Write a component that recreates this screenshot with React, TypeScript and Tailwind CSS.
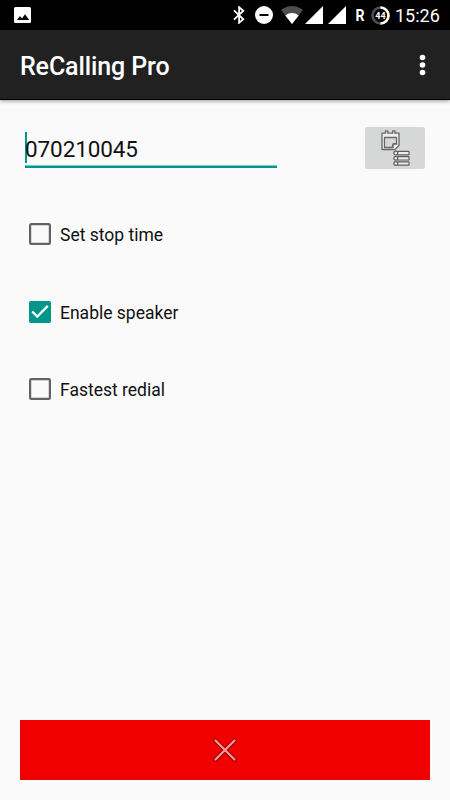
import React, { useState } from "react";

function StatusBar() {
  return (
    <div className="flex h-[30px] items-center bg-black text-white">
      <svg className="ml-[14px] shrink-0" width="17" height="16" viewBox="0 0 17 16">
        <rect width="17" height="16" rx="1.5" fill="#fff" />
        <path d="M3 13l3-4 2 2.4 3-4.1 4.2 5.7z" fill="#000" />
      </svg>
      <svg className="ml-[202px] shrink-0" width="12" height="18" viewBox="0 0 12 18" fill="none" stroke="#fff" strokeWidth="1.8">
        <path d="M1 4.3L10.3 13.3 6.1 16.8V1.2L10.3 4.7 1 13.7" />
      </svg>
      <svg className="ml-[10px] shrink-0" width="18" height="18" viewBox="0 0 18 18">
        <circle cx="9" cy="9" r="9" fill="#fff" />
        <rect x="4.5" y="8" width="9" height="2" fill="#000" />
      </svg>
      <svg className="ml-[8px] shrink-0" width="22" height="18" viewBox="0 0 22 18">
        <path d="M11 18L0 4Q11-4 22 4z" fill="#4d4d4d" />
        <path d="M11 18L4.3 9.4Q11 4.8 17.7 9.4z" fill="#fff" />
      </svg>
      <svg className="ml-[2px] shrink-0" width="18" height="18" viewBox="0 0 18 18">
        <path d="M0 18L18 0V18z" fill="#fff" />
      </svg>
      <svg className="ml-[5px] shrink-0" width="18" height="18" viewBox="0 0 18 18">
        <path d="M0 18L18 0V18z" fill="#fff" />
      </svg>
      <svg className="ml-[9px] shrink-0" width="11" height="20" viewBox="0 0 11 20">
        <text x="0.5" y="15.8" fill="#fff" fontSize="16" fontWeight="700" textLength="9" lengthAdjust="spacingAndGlyphs">R</text>
      </svg>
      <svg className="ml-[5px] shrink-0" width="19" height="19" viewBox="0 0 19 19">
        <circle cx="9.5" cy="9.5" r="8" fill="none" stroke="#4d4d4d" strokeWidth="2.6" />
        <path d="M9.5 1.5A8 8 0 1 1 9.5 17.5" fill="none" stroke="#fff" strokeWidth="2.6" />
        <text x="9.5" y="12.8" textAnchor="middle" fill="#fff" fontSize="9" fontWeight="700">44</text>
      </svg>
      <span className="ml-[5px] pt-[2px] text-[18px] leading-[30px]">15:26</span>
    </div>
  );
}

function Option({ label, initial = false }: { label: string; initial?: boolean }) {
  const [on, setOn] = useState(initial);
  return (
    <button onClick={() => setOn(!on)} className="flex h-[40px] items-center text-left text-[17.5px] text-[#111]">
      <svg className="mr-[9px] shrink-0" width="22" height="22" viewBox="0 0 22 22" fill="none">
        {on ? (
          <>
            <rect width="22" height="22" rx="2" fill="#009688" />
            <path d="M3.2 10.5l5 5L18.8 4.9" stroke="#fff" strokeWidth="2.3" />
          </>
        ) : (
          <rect x="1.1" y="1.1" width="19.8" height="19.8" rx="1.4" stroke="#636363" strokeWidth="2.2" />
        )}
      </svg>
      <span className="pt-[3px]">{label}</span>
    </button>
  );
}

function LogIcon() {
  return (
    <svg width="60" height="42" viewBox="0 0 60 42" fill="none" strokeLinejoin="round">
      <path d="M17 6.2h3.5V3.8h2.2v2.4h5V3.8h2.2v2.4H34v12.3L30 22.5H17z" fill="#eee" stroke="#686868" strokeWidth="1.3" />
      <path d="M19.5 10.5h12v6l-3.5.3-.8 3.7h-7.7z" fill="#d6d7d7" stroke="#686868" strokeWidth="1.3" />
      <path d="M28.2 21v-3.8h4.3" stroke="#686868" />
      <g fill="#eee" stroke="#5e5e5e" strokeWidth="1.2">
        <rect x="32.5" y="24.4" width="11.5" height="3.4" rx=".6" />
        <rect x="32.5" y="29.6" width="11.5" height="3.4" rx=".6" />
        <rect x="32.5" y="34.8" width="11.5" height="3.4" rx=".6" />
        <circle cx="30.8" cy="26.1" r="1.9" />
        <circle cx="30.8" cy="31.3" r="1.9" />
        <circle cx="30.8" cy="36.5" r="1.9" />
      </g>
    </svg>
  );
}

export default function App() {
  return (
    <div className="flex h-[800px] w-[450px] flex-col overflow-hidden bg-[#fafafa] font-[Roboto,sans-serif]">
      <StatusBar />
      <header className="flex h-[70px] shrink-0 items-center justify-between border-b border-black bg-[#212121] pr-[24px] pl-[20px] shadow-[0_1px_4px_rgba(0,0,0,0.4)]">
        <h1 className="pt-[5px] text-[25px] font-medium tracking-[-0.12px] text-white">ReCalling Pro</h1>
        <button aria-label="Menu">
          <svg width="7" height="22" viewBox="0 0 7 22" fill="#fff">
            <circle cx="3.5" cy="3.5" r="2.8" />
            <circle cx="3.5" cy="11" r="2.8" />
            <circle cx="3.5" cy="18.5" r="2.8" />
          </svg>
        </button>
      </header>
      <main className="flex flex-1 flex-col px-[20px] pb-[20px]">
        <div className="mt-[27px] flex items-start justify-between pr-[5px] pl-[5px]">
          <div className="mt-[5px] w-[252px]">
            <div className="flex h-[33px] items-start">
              <span className="h-[31px] w-[2px] bg-[#009688]" />
              <span className="-ml-[2px] pt-px text-[22.5px] leading-[33px] tracking-[-0.1px] text-[#111]">070210045</span>
            </div>
            <svg className="block" width="252" height="3">
              <rect y="0.5" width="252" height="2.5" fill="#009688" />
            </svg>
          </div>
          <button aria-label="Call log" className="h-[42px] w-[60px] rounded-[2.5px] bg-[#d6d7d7]">
            <LogIcon />
          </button>
        </div>
        <div className="mt-[45px] ml-[9px] flex flex-col items-start gap-[37.5px]">
          <Option label="Set stop time" />
          <Option label="Enable speaker" initial />
          <Option label="Fastest redial" />
        </div>
        <button aria-label="Stop" className="mt-auto flex h-[60px] items-center justify-center bg-[#f00000]">
          <svg width="26" height="26" viewBox="0 0 26 26" strokeLinecap="round">
            <path d="M3.5 3.5l19 19M22.5 3.5l-19 19" stroke="#8f0000" strokeWidth="4.2" />
            <path d="M3.5 3.5l19 19M22.5 3.5l-19 19" stroke="#ff9494" strokeWidth="2.3" />
          </svg>
        </button>
      </main>
    </div>
  );
}
